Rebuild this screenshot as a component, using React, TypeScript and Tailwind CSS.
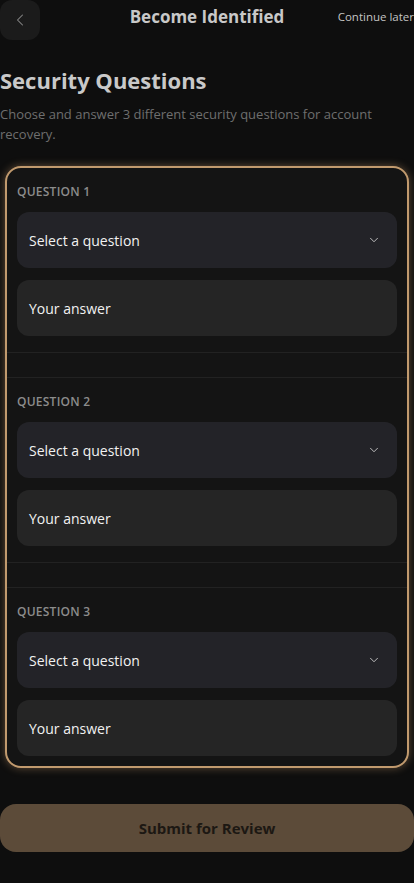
import React from "react";
import { ChevronLeft, ChevronDown } from "lucide-react";

const questions = [1, 2, 3];

function QuestionBlock({ index, last }: { index: number; last: boolean }) {
  return (
    <div
      className={`px-[10px] pt-4 ${last ? "pb-0" : "pb-4 border-b border-[#222222]"} ${
        index > 1 ? "border-t border-[#222222]" : ""
      }`}
    >
      <div className="text-[12px] leading-4 font-semibold tracking-[0.02em] text-[#8c8c8c] mb-3">
        QUESTION {index}
      </div>
      <button className="w-full h-14 rounded-xl bg-[#232328] flex items-center justify-between pl-3 pr-4 text-left">
        <span className="text-[14px] text-[#f2f2f2]">Select a question</span>
        <ChevronDown className="h-3.5 w-3.5 text-[#d0d0d0]" strokeWidth={1.5} />
      </button>
      <div className="mt-3 w-full h-14 rounded-xl bg-[#252525] flex items-center px-3">
        <span className="text-[14px] text-[#f2f2f2]">Your answer</span>
      </div>
    </div>
  );
}

export default function App() {
  return (
    <div
      className="min-h-[883px] w-[414px] bg-[#0e0e0e] overflow-hidden"
      style={{ fontFamily: '"Open Sans", "Noto Sans", sans-serif' }}
    >
      {/* Header */}
      <div className="relative h-10 flex items-center">
        <button className="h-10 w-10 rounded-xl bg-[#1b1b1b] flex items-center justify-center">
          <ChevronLeft className="h-5 w-5 text-[#8a8a8a]" strokeWidth={1.25} />
        </button>
        <h1 className="absolute left-1/2 -translate-x-1/2 top-[5px] text-[17px] leading-6 font-bold text-[#c8c8c8] whitespace-nowrap">
          Become Identified
        </h1>
        <span className="absolute right-0 top-[9px] text-[11.5px] leading-4 text-[#c4c4c4] whitespace-nowrap">
          Continue later
        </span>
      </div>

      <div className="mt-[24px]">
        <h2 className="text-[22px] leading-8 font-bold text-[#c9c9c9]">Security Questions</h2>
        <p className="mt-[8px] text-[13px] leading-5 text-[#6e6e6e] pr-4">
          Choose and answer 3 different security questions for account recovery.
        </p>
      </div>

      {/* Card */}
      <div className="mt-[22px] mx-[5px] rounded-2xl border-2 border-[#c19a6e] bg-[#141414] shadow-[0_0_8px_rgba(200,156,108,0.45)] pb-[10px] flex flex-col gap-6">
        {questions.map((q, i) => (
          <QuestionBlock key={q} index={q} last={i === questions.length - 1} />
        ))}
      </div>

      <button className="mt-9 w-full h-12 rounded-2xl bg-[#5c4b39] text-[15px] font-bold text-[#1c1813]">
        Submit for Review
      </button>
    </div>
  );
}
